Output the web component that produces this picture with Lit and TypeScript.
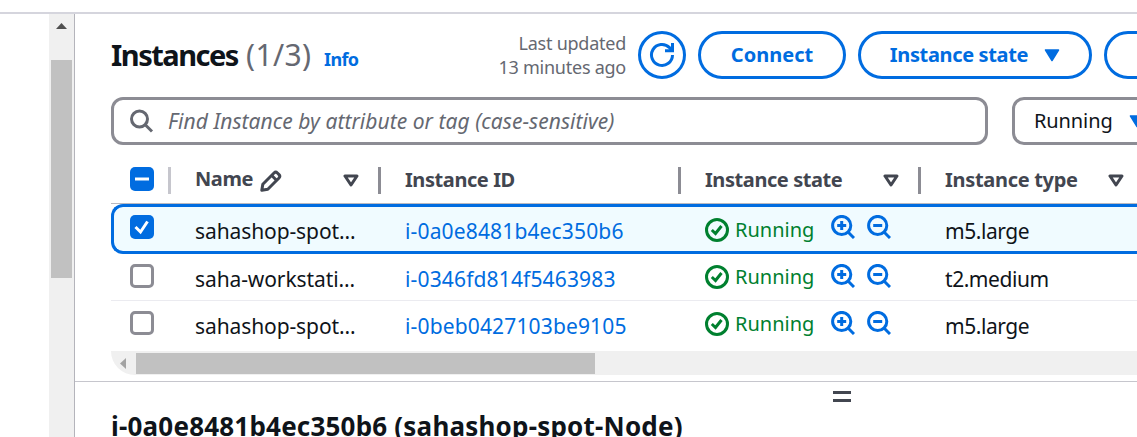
import { LitElement, html, svg, css } from "lit";
import { customElement } from "lit/decorators.js";
import { classMap } from "lit/directives/class-map.js";

interface Instance {
  name: string;
  id: string;
  type: string;
  selected: boolean;
}

const instances: Instance[] = [
  { name: "sahashop-spot…", id: "i-0a0e8481b4ec350b6", type: "m5.large", selected: true },
  { name: "saha-workstati…", id: "i-0346fd814f5463983", type: "t2.medium", selected: false },
  { name: "sahashop-spot…", id: "i-0beb0427103be9105", type: "m5.large", selected: false },
];

const caretFilled = html`<svg class="caret" width="16" height="13" viewBox="0 0 16 13">
  <path d="M1.500 1h13l-6.500 10.500z" fill="currentColor" stroke="currentColor" stroke-width="1.500" stroke-linejoin="round" />
</svg>`;

const sortCaret = html`<svg class="sort" width="16" height="13" viewBox="0 0 16 13">
  <path d="M2 2h12l-6 9z" fill="none" stroke="currentColor" stroke-width="3" stroke-linejoin="round" />
</svg>`;

const magnifier = (plus: boolean) => html`<svg class="lens" width="24" height="24" viewBox="0 0 24 24">
  <circle cx="10.700" cy="10.500" r="9.100" fill="none" stroke="currentColor" stroke-width="3" />
  <path d="M17 17l6 6" stroke="currentColor" stroke-width="3" />
  <path d="M6.200 10.500h9" stroke="currentColor" stroke-width="3" />
  ${plus ? svg`<path d="M10.700 6v9" stroke="currentColor" stroke-width="3" />` : ""}
</svg>`;

@customElement("app-root")
export class AppRoot extends LitElement {
  static styles = css`
    :host {
      display: flex;
      flex-direction: column;
      width: 1137px;
      height: 437px;
      overflow: hidden;
      background: #fff;
      color: #0f141a;
      font: 20px/24px "Noto Sans", "Open Sans", sans-serif;
      white-space: nowrap;
    }
    * { box-sizing: border-box; }
    svg { display: block; flex: none; }
    .topbar { height: 14px; flex: none; border-bottom: 2px solid #d5d5dd; }
    .body { flex: 1; display: flex; min-height: 0; }
    .nav { width: 49px; flex: none; }
    .vscroll {
      width: 26px;
      flex: none;
      background: #f0f0f0;
      border-right: 1px solid #b4b4bb;
      padding: 9px 2px 0;
      display: flex;
      flex-direction: column;
      align-items: center;
    }
    .vscroll svg { margin-bottom: 31px; }
    .vthumb { width: 21px; height: 218px; background: #c1c1c1; }
    .main { flex: 1; min-width: 0; display: flex; flex-direction: column; }
    .header {
      height: 83px;
      flex: none;
      display: flex;
      padding: 17px 0 0 36px;
    }
    .titles { width: 374px; flex: none; display: flex; align-items: baseline; height: 48px; line-height: 47px; }
    .title { font-size: 29px; font-weight: 700; letter-spacing: -1.5px; width: 135px; }
    .count { font-size: 30px; color: #656871; width: 78px; letter-spacing: 0.4px; }
    .info { font-size: 18px; font-weight: 700; color: #006ce0; letter-spacing: -0.6px; }
    .updated {
      width: 141px;
      flex: none;
      text-align: right;
      font-size: 18px;
      line-height: 24px;
      letter-spacing: -0.25px;
      color: #656871;
    }
    .actions { display: flex; gap: 12px; margin-left: 12px; }
    .btn {
      height: 48px;
      flex: none;
      border: 3px solid #006ce0;
      border-radius: 24px;
      color: #006ce0;
      font-weight: 700;
      display: flex;
      align-items: center;
      justify-content: center;
    }
    .refresh { width: 48px; }
    .connect { width: 148px; }
    .state { width: 234px; gap: 16px; letter-spacing: -0.35px; }
    .more { width: 120px; }
    .filters { height: 48px; flex: none; display: flex; gap: 24px; padding-left: 36px; }
    .field {
      flex: none;
      border: 3px solid #8c8c94;
      border-radius: 12px;
      display: flex;
      align-items: center;
    }
    .search { width: 877px; padding-left: 16px; gap: 14px; color: #656871; }
    .placeholder { font-style: italic; font-size: 21px; letter-spacing: 0.04px; }
    .select { width: 240px; padding-left: 19px; gap: 16px; letter-spacing: -0.1px; }
    .select svg { color: #006ce0; }
    .table { margin-left: 36px; flex: none; }
    .row {
      display: grid;
      grid-template-columns: 60px 210px 300px 240px 300px;
    }
    .head {
      height: 59px;
      border-bottom: 1px solid #b9b9c0;
      padding-top: 22px;
      color: #424650;
      font-weight: 700;
      letter-spacing: -0.42px;
    }
    .hcell {
      height: 27px;
      border-right: 3px solid #8c8c94;
      padding: 0 19px 0 24px;
      display: flex;
      align-items: center;
    }
    .hcell span { padding-bottom: 2px; }
    .hcell.check { padding: 0 0 3px 19px; border-color: #c6c6cd; }
    .hcell.name span { margin-right: 7px; padding-bottom: 3px; }
    .hcell.type { padding-right: 0; border: 0; letter-spacing: -0.3px; }
    .hcell .sort { margin-left: auto; }
    .hcell.type .sort { margin-left: 30px; }
    .line { height: 47px; border-bottom: 1px solid #ebebf0; padding-top: 10px; }
    .line.last { height: 50px; border-bottom: 0; }
    .line.selected {
      height: 50px;
      border: 3px solid #006ce0;
      border-right: 0;
      border-radius: 12px 0 0 12px;
      background: #f0fbff;
      padding-top: 8px;
      grid-template-columns: 57px 210px 300px 240px 300px;
    }
    .box {
      width: 24px;
      height: 24px;
      flex: none;
      border: 3px solid #8c8c94;
      border-radius: 5px;
      background: #fff;
    }
    .box.on { border: 0; background: #006ce0; }
    .cell { padding-left: 24px; display: flex; height: 30px; }
    .cell.check { padding-left: 19px; }
    .selected .cell.check { padding-left: 16px; }
    .text { padding-top: 3px; font-size: 21px; letter-spacing: -0.1px; }
    .selected .text { padding-top: 4px; }
    .id { color: #006ce0; letter-spacing: 0.15px; }
    .kind { letter-spacing: -0.45px; }
    .status { color: #00802f; display: flex; gap: 6px; width: 126px; padding-top: 2px; }
    .status span { margin-top: -1px; }
    .status svg { margin-top: -1px; }
    .selected .status { padding-top: 4px; }
    .lens { color: #006ce0; margin-right: 12px; }
    .hscroll {
      margin-left: 36px;
      height: 24px;
      flex: none;
      background: #f0f0f0;
      border-bottom-left-radius: 24px;
      display: flex;
      align-items: center;
      padding-left: 9px;
    }
    .hthumb { width: 459px; height: 21px; background: #c1c1c1; margin-left: 10px; }
    .split {
      margin-top: 6px;
      flex: 1;
      border-top: 1px solid #c6c6cd;
      padding: 9px 0 0 36px;
      overflow: hidden;
    }
    .handle { width: 18px; height: 11px; margin-left: 722px; border: solid #424650; border-width: 3px 0; }
    .detail { font-size: 26px; line-height: 32px; font-weight: 700; margin-top: 8px; letter-spacing: 0.2px; }
  `;

  private checkbox(on: boolean) {
    return html`<div class=${classMap({ box: true, on })}>
      ${on
        ? html`<svg width="24" height="24" viewBox="0 0 24 24"><path d="M5.500 12l5 5L17.500 6.500" fill="none" stroke="#fff" stroke-width="3" /></svg>`
        : ""}
    </div>`;
  }

  private line(item: Instance, index: number) {
    const classes = { row: true, line: true, selected: item.selected, last: index === instances.length - 1 };
    return html`<div class=${classMap(classes)}>
      <div class="cell check">${this.checkbox(item.selected)}</div>
      <div class="cell"><span class="text label">${item.name}</span></div>
      <div class="cell"><span class="text id">${item.id}</span></div>
      <div class="cell">
        <div class="status">
          <svg width="24" height="24" viewBox="0 0 24 24">
            <circle cx="12" cy="12" r="10.500" fill="none" stroke="currentColor" stroke-width="3" />
            <path d="M6.800 12l3.700 3.500L16.500 8" fill="none" stroke="currentColor" stroke-width="3" />
          </svg>
          <span class="running">Running</span>
        </div>
        ${magnifier(true)}${magnifier(false)}
      </div>
      <div class="cell"><span class="text kind">${item.type}</span></div>
    </div>`;
  }

  render() {
    return html`
      <div class="topbar"></div>
      <div class="body">
        <div class="nav"></div>
        <div class="vscroll">
          <svg width="11" height="6" viewBox="0 0 11 6"><path d="M5.500 0L11 6H0z" fill="#505050" /></svg>
          <div class="vthumb"></div>
        </div>
        <div class="main">
          <div class="header">
            <div class="titles">
              <span class="title">Instances</span><span class="count">(1/3)</span><span class="info">Info</span>
            </div>
            <div class="updated"><div>Last updated</div><div>13 minutes ago</div></div>
            <div class="actions">
              <div class="btn refresh">
                <svg width="26" height="26" viewBox="0 0 26 26" fill="none" stroke="currentColor" stroke-width="3">
                  <path d="M23.500 13A10.500 10.500 0 1 1 20.500 5.600L22.500 8" />
                  <path d="M23.500 1v7.700H16" />
                </svg>
              </div>
              <div class="btn connect"><span>Connect</span></div>
              <div class="btn state"><span>Instance state</span>${caretFilled}</div>
              <div class="btn more"></div>
            </div>
          </div>
          <div class="filters">
            <div class="field search">
              <svg width="24" height="24" viewBox="0 0 24 24" fill="none" stroke="currentColor" stroke-width="3">
                <circle cx="9.500" cy="10" r="8" /><path d="M15 15.500l7 7" />
              </svg>
              <span class="placeholder">Find Instance by attribute or tag (case-sensitive)</span>
            </div>
            <div class="field select"><span>Running</span>${caretFilled}</div>
          </div>
          <div class="table">
            <div class="row head">
              <div class="hcell check">
                <div class="box on">
                  <svg width="24" height="24" viewBox="0 0 24 24"><path d="M5 12h14" stroke="#fff" stroke-width="3" /></svg>
                </div>
              </div>
              <div class="hcell name">
                <span>Name</span>
                <svg width="22" height="22" viewBox="0 0 22 22" fill="none" stroke="currentColor" stroke-width="3" stroke-linejoin="round">
                  <path d="M1.800 20.200l1-6L14 3q1.700-1.600 3.400 0l1.600 1.600q1.600 1.700 0 3.400L7.800 19.200z" />
                  <path d="M11.800 5.500l4.700 4.700" />
                </svg>
                ${sortCaret}
              </div>
              <div class="hcell"><span>Instance ID</span></div>
              <div class="hcell"><span>Instance state</span>${sortCaret}</div>
              <div class="hcell type"><span>Instance type</span>${sortCaret}</div>
            </div>
            ${instances.map((item, index) => this.line(item, index))}
          </div>
          <div class="hscroll">
            <svg width="6" height="11" viewBox="0 0 6 11"><path d="M0 5.500L6 0v11z" fill="#a3a3a3" /></svg>
            <div class="hthumb"></div>
          </div>
          <div class="split">
            <div class="handle"></div>
            <div class="detail">i-0a0e8481b4ec350b6 (sahashop-spot-Node)</div>
          </div>
        </div>
      </div>
    `;
  }
}
